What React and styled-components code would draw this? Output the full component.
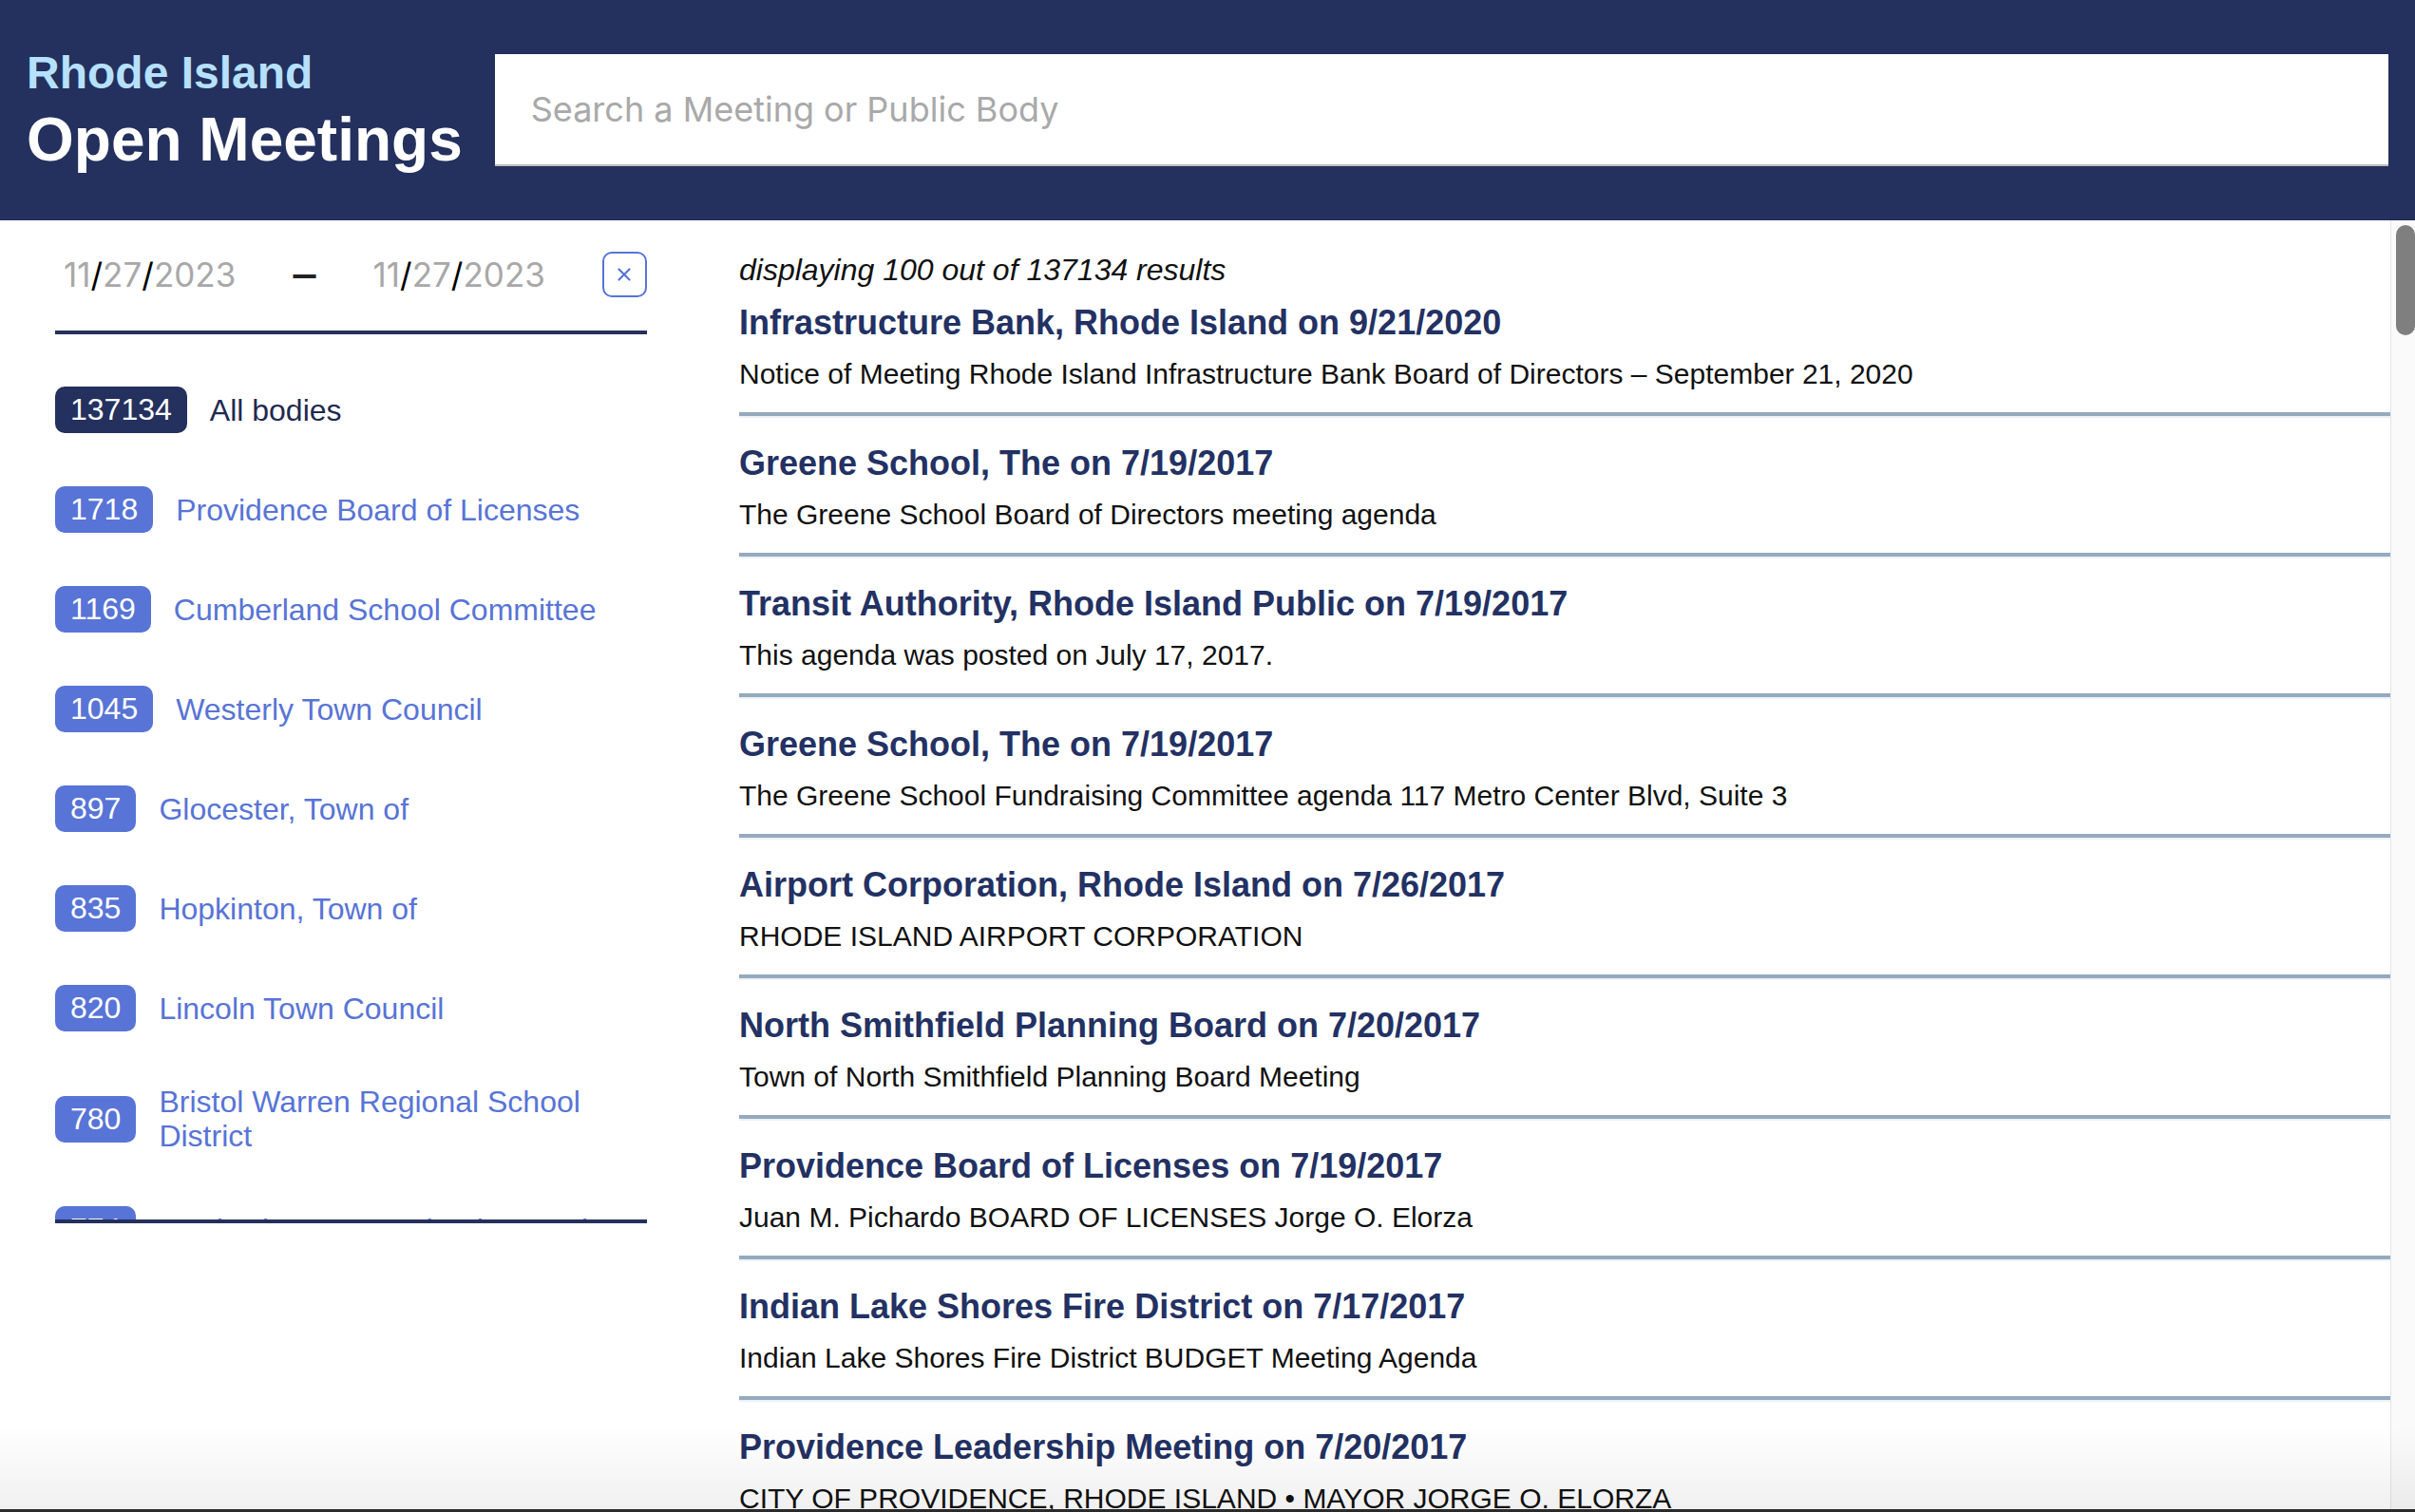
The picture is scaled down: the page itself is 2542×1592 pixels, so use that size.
import React from "react";
import styled, { createGlobalStyle } from "styled-components";

const NAVY = "#24305d";
const BLUE = "#5874d6";

const GlobalStyle = createGlobalStyle`
  html, body {
    margin: 0;
    height: 100%;
  }
  body {
    font-family: "Liberation Sans", Arial, Helvetica, sans-serif;
    background: #fff;
    color: #111;
    overflow: hidden;
  }
  #root {
    height: 100%;
  }
`;

const Page = styled.div`
  display: flex;
  flex-direction: column;
  height: 100vh;
`;

const Header = styled.header`
  flex: none;
  height: 232px;
  box-sizing: border-box;
  padding: 0 28px;
  background: ${NAVY};
  display: flex;
  align-items: center;
  gap: 34px;
`;

const Brand = styled.div`
  display: flex;
  flex-direction: column;
  gap: 14px;
  font-weight: 700;
  white-space: nowrap;
`;

const State = styled.span`
  font-size: 48px;
  line-height: 48px;
  color: #b5e1fe;
`;

const Name = styled.span`
  font-size: 64px;
  line-height: 64px;
  color: #fff;
`;

const Search = styled.input`
  flex: 1;
  height: 118px;
  box-sizing: border-box;
  padding: 0 38px;
  border: 0;
  border-bottom: 2px solid #bdbdbd;
  background: #fff;
  font-family: Inter, "Liberation Sans", sans-serif;
  font-size: 36px;
  color: #222;
  outline: none;

  &::placeholder {
    color: #a9a9a9;
  }
`;

const Body = styled.div`
  flex: 1;
  display: flex;
  min-height: 0;
`;

const Sidebar = styled.aside`
  flex: none;
  width: 720px;
  box-sizing: border-box;
  padding: 0 39px 0 58px;
`;

const DateRow = styled.div`
  display: flex;
  align-items: center;
  justify-content: space-between;
  padding: 33px 0 35px 9px;
  border-bottom: 4px solid ${NAVY};
`;

const DateField = styled.span`
  font-family: Inter, "Liberation Sans", sans-serif;
  font-size: 35px;
  line-height: 48px;
  color: #a8a8a8;
`;

const Slash = styled.span`
  color: #000;
`;

const Dash = styled.span`
  font-family: Inter, "Liberation Sans", sans-serif;
  font-size: 48px;
  line-height: 48px;
  color: #222;
`;

const ClearButton = styled.button`
  flex: none;
  width: 47px;
  height: 48px;
  box-sizing: border-box;
  padding: 0;
  border: 2px solid ${BLUE};
  border-radius: 10px;
  background: #fff;
  display: flex;
  align-items: center;
  justify-content: center;
`;

const BodyList = styled.ul`
  list-style: none;
  margin: 0;
  padding: 27px 0 0;
  height: 936px;
  box-sizing: border-box;
  overflow: hidden;
  border-bottom: 4px solid ${NAVY};
`;

const BodyRow = styled.li`
  display: flex;
  align-items: center;
  gap: 24px;
  padding: 28px 0;
`;

const Count = styled.span`
  flex: none;
  padding: 8px 16px;
  border-radius: 10px;
  background: ${(p) => (p.$active ? NAVY : BLUE)};
  color: #fff;
  font-size: 32px;
  line-height: 33px;
`;

const BodyName = styled.a`
  font-size: 32px;
  line-height: 36px;
  color: ${(p) => (p.$active ? "#1f2a50" : BLUE)};
  text-decoration: none;
`;

const ResultsPane = styled.div`
  flex: 1;
  min-width: 0;
  display: flex;
`;

const Results = styled.main`
  flex: 1;
  min-width: 0;
  overflow-y: auto;
  scrollbar-width: none;
  box-sizing: border-box;
  padding: 32px 0 0 58px;

  &::-webkit-scrollbar {
    display: none;
  }
`;

const Rail = styled.div`
  flex: none;
  width: 26px;
  box-sizing: border-box;
  padding: 5px 0 0 5px;
  background: #fafafa;
  border-left: 1px solid #e6e6e6;
`;

const Thumb = styled.div`
  width: 20px;
  height: 116px;
  border-radius: 10px;
  background: #7f7f7f;
`;

const Summary = styled.p`
  margin: 0 0 14px;
  font-size: 32px;
  line-height: 40px;
  font-style: italic;
  color: #111;
`;

const Meeting = styled.article``;

const MeetingTitle = styled.a`
  display: block;
  font-size: 36px;
  line-height: 44px;
  font-weight: 700;
  color: #233163;
  text-decoration: none;
`;

const MeetingText = styled.p`
  margin: 12px 0 0;
  font-size: 30px;
  line-height: 40px;
  color: #111;
  white-space: nowrap;
  overflow: hidden;
`;

const Divider = styled.hr`
  height: 4px;
  margin: 20px 0 26px;
  border: 0;
  border-bottom: 2px solid #eef2f6;
  background: #95aabf;
`;

const WindowEdge = styled.div`
  position: fixed;
  left: 0;
  right: 0;
  bottom: 0;
  height: 86px;
  pointer-events: none;
  background: linear-gradient(to bottom, rgba(0, 0, 0, 0), rgba(0, 0, 0, 0.06));
  border-bottom: 3px solid #2a2a2a;
`;

const bodies = [
  { count: 137134, name: "All bodies", active: true },
  { count: 1718, name: "Providence Board of Licenses" },
  { count: 1169, name: "Cumberland School Committee" },
  { count: 1045, name: "Westerly Town Council" },
  { count: 897, name: "Glocester, Town of" },
  { count: 835, name: "Hopkinton, Town of" },
  { count: 820, name: "Lincoln Town Council" },
  { count: 780, name: "Bristol Warren Regional School District" },
  { count: 774, name: "North Kingstown School Committee" },
  { count: 761, name: "Coventry Town Council" },
];

const meetings = [
  {
    title: "Infrastructure Bank, Rhode Island on 9/21/2020",
    text: "Notice of Meeting Rhode Island Infrastructure Bank Board of Directors \u2013 September 21, 2020",
  },
  { title: "Greene School, The on 7/19/2017", text: "The Greene School Board of Directors meeting agenda" },
  { title: "Transit Authority, Rhode Island Public on 7/19/2017", text: "This agenda was posted on July 17, 2017." },
  {
    title: "Greene School, The on 7/19/2017",
    text: "The Greene School Fundraising Committee agenda 117 Metro Center Blvd, Suite 3",
  },
  { title: "Airport Corporation, Rhode Island on 7/26/2017", text: "RHODE ISLAND AIRPORT CORPORATION" },
  { title: "North Smithfield Planning Board on 7/20/2017", text: "Town of North Smithfield Planning Board Meeting" },
  {
    title: "Providence Board of Licenses on 7/19/2017",
    text: "Juan M. Pichardo BOARD OF LICENSES Jorge O. Elorza",
  },
  {
    title: "Indian Lake Shores Fire District on 7/17/2017",
    text: "Indian Lake Shores Fire District BUDGET Meeting Agenda",
  },
  {
    title: "Providence Leadership Meeting on 7/20/2017",
    text: "CITY OF PROVIDENCE, RHODE ISLAND \u2022 MAYOR JORGE O. ELORZA",
  },
  { title: "Westerly Town Council on 7/24/2017", text: "Regular Meeting of the Westerly Town Council" },
  { title: "Lincoln Town Council on 7/18/2017", text: "Town of Lincoln Town Council Meeting Agenda" },
  { title: "Cumberland School Committee on 7/20/2017", text: "Cumberland School Committee Regular Meeting" },
];

// the page lists 100 results at a time
const shown = Array.from({ length: 100 }, (_, i) => meetings[i % meetings.length]);

const DateValue = () => (
  <DateField>
    11<Slash>/</Slash>27<Slash>/</Slash>2023
  </DateField>
);

const App = () => {
  return (
    <Page>
      <GlobalStyle />
      <Header>
        <Brand>
          <State>Rhode Island</State>
          <Name>Open Meetings</Name>
        </Brand>
        <Search type="text" placeholder="Search a Meeting or Public Body" />
      </Header>
      <Body>
        <Sidebar>
          <DateRow>
            <DateValue />
            <Dash>–</Dash>
            <DateValue />
            <ClearButton aria-label="clear dates">
              <svg width="14" height="14" viewBox="0 0 14 14">
                <path d="M1.5 1.5 L12.5 12.5 M12.5 1.5 L1.5 12.5" stroke={BLUE} strokeWidth="2.2" strokeLinecap="round" />
              </svg>
            </ClearButton>
          </DateRow>
          <BodyList>
            {bodies.map((b) => (
              <BodyRow key={b.name}>
                <Count $active={b.active}>{b.count}</Count>
                <BodyName href="#" $active={b.active}>
                  {b.name}
                </BodyName>
              </BodyRow>
            ))}
          </BodyList>
        </Sidebar>
        <ResultsPane>
          <Results>
            <Summary>displaying 100 out of 137134 results</Summary>
            {shown.map((m, i) => (
              <Meeting key={i}>
                <MeetingTitle href="#">{m.title}</MeetingTitle>
                <MeetingText>{m.text}</MeetingText>
                <Divider />
              </Meeting>
            ))}
          </Results>
          <Rail>
            <Thumb />
          </Rail>
        </ResultsPane>
      </Body>
      <WindowEdge />
    </Page>
  );
};

export default App;
